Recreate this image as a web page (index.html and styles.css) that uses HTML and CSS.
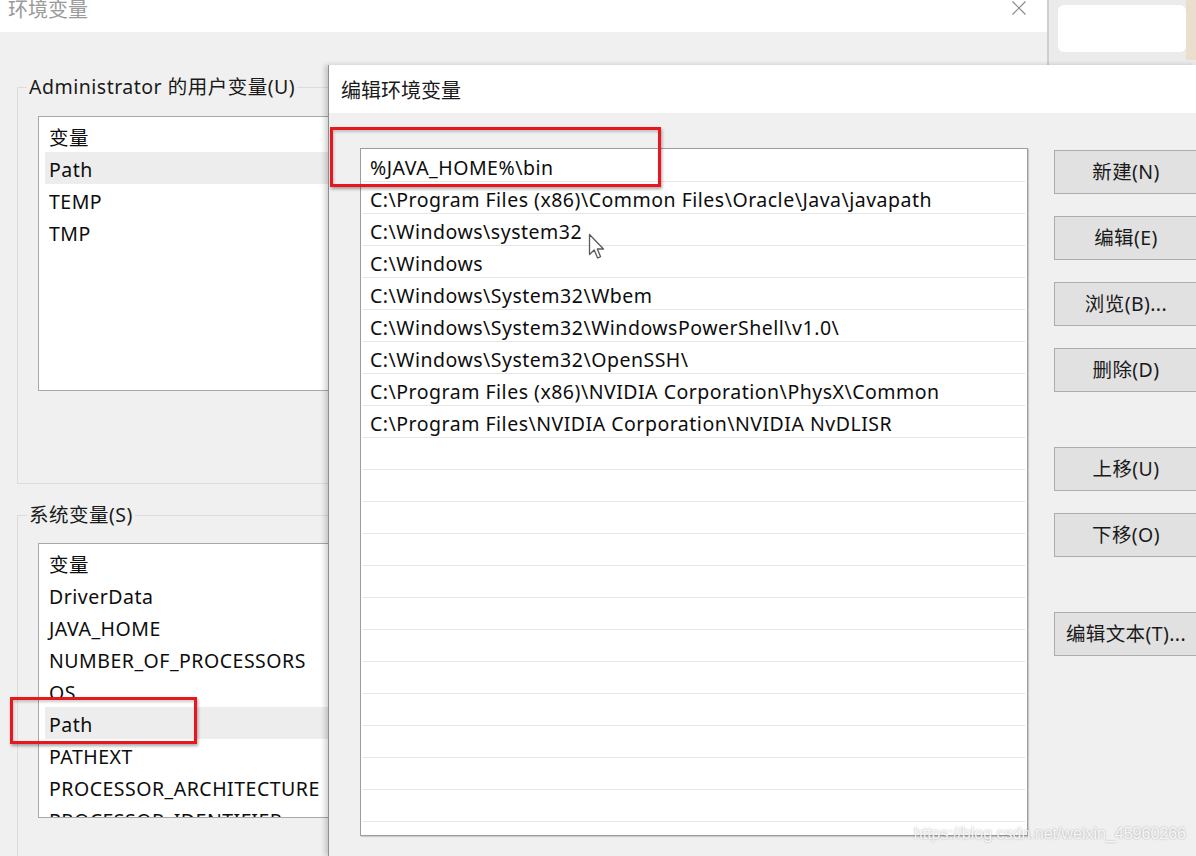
FILE: index.html
```html
<!DOCTYPE html>
<html lang="zh-CN">
<head>
<meta charset="utf-8">
<title>编辑环境变量</title>
<link rel="stylesheet" href="styles.css">
</head>
<body>
<div class="desktop">
  <div class="win back">
    <div class="titlebar">
      <span class="title">环境变量</span>
      <svg class="close" width="16" height="16" viewBox="0 0 16 16"><path d="M1.5 1.5 L14.5 14.5 M14.5 1.5 L1.5 14.5" stroke="#8a8a8a" stroke-width="1.2" fill="none"/></svg>
    </div>
    <div class="back-body">
      <fieldset class="group g1">
        <legend>Administrator 的用户变量(U)</legend>
        <div class="vlist l1">
          <div class="vrow">变量</div>
          <div class="vrow sel">Path</div>
          <div class="vrow">TEMP</div>
          <div class="vrow">TMP</div>
        </div>
      </fieldset>
      <fieldset class="group g2">
        <legend>系统变量(S)</legend>
        <div class="vlist l2">
          <div class="vrow">变量</div>
          <div class="vrow">DriverData</div>
          <div class="vrow">JAVA_HOME</div>
          <div class="vrow">NUMBER_OF_PROCESSORS</div>
          <div class="vrow">OS</div>
          <div class="vrow sel">Path</div>
          <div class="vrow">PATHEXT</div>
          <div class="vrow">PROCESSOR_ARCHITECTURE</div>
          <div class="vrow">PROCESSOR_IDENTIFIER</div>
        </div>
      </fieldset>
    </div>
  </div>

  <div class="win side">
    <div class="side-box"></div>
    <div class="side-edge"></div>
  </div>

  <div class="win front">
    <div class="ftitle">编辑环境变量</div>
    <div class="fbody">
      <div class="plist">
        <div class="prow">%JAVA_HOME%\bin</div>
        <div class="prow">C:\Program Files (x86)\Common Files\Oracle\Java\javapath</div>
        <div class="prow">C:\Windows\system32</div>
        <div class="prow">C:\Windows</div>
        <div class="prow">C:\Windows\System32\Wbem</div>
        <div class="prow">C:\Windows\System32\WindowsPowerShell\v1.0\</div>
        <div class="prow">C:\Windows\System32\OpenSSH\</div>
        <div class="prow">C:\Program Files (x86)\NVIDIA Corporation\PhysX\Common</div>
        <div class="prow">C:\Program Files\NVIDIA Corporation\NVIDIA NvDLISR</div>
        <div class="prow"></div><div class="prow"></div><div class="prow"></div>
        <div class="prow"></div><div class="prow"></div><div class="prow"></div>
        <div class="prow"></div><div class="prow"></div><div class="prow"></div>
        <div class="prow"></div><div class="prow"></div><div class="prow"></div>
        <div class="prow"></div><div class="prow"></div>
      </div>
      <div class="btns">
        <div class="btn">新建(N)</div>
        <div class="btn">编辑(E)</div>
        <div class="btn">浏览(B)...</div>
        <div class="btn">删除(D)</div>
        <div class="btn sep">上移(U)</div>
        <div class="btn">下移(O)</div>
        <div class="btn sep">编辑文本(T)...</div>
      </div>
    </div>
  </div>

  <div class="mark m1"></div>
  <div class="mark m2"></div>

  <svg class="cursor" width="20" height="28" viewBox="0 0 20 28"><path d="M1.5 1.5 L1.5 21.5 L6.2 17 L9.6 25 L12.6 23.7 L9.3 16 L15.5 16 Z" fill="#fff" stroke="#5a5a5a" stroke-width="1.3" stroke-linejoin="round"/></svg>

  <div class="watermark">https://blog.csdn.net/weixin_45960266</div>
</div>
</body>
</html>
```

FILE: styles.css
```css
* { box-sizing: border-box; }
html, body { margin: 0; padding: 0; background: #f0f0f0; }
body {
  font-family: "Noto Sans", "Noto Sans CJK SC", sans-serif;
  color: #0d0d0d;
}
.desktop {
  position: relative;
  width: 1196px;
  height: 856px;
  overflow: hidden;
  background: #f0f0f0;
}
.win { position: absolute; }

/* back window */
.back {
  left: 0; top: 0;
  width: 1047px; height: 856px;
  display: flex; flex-direction: column;
}
.titlebar {
  height: 32px;
  background: #fff;
  display: flex;
  align-items: flex-start;
  justify-content: space-between;
  flex: none;
}
.title {
  font-size: 20px;
  line-height: 20px;
  color: #9a9a9a;
  padding-left: 8px;
}
.close { margin: 0 20px 0 0; }
.back-body {
  flex: 1;
  background: #f0f0f0;
  padding-top: 42px;
  display: flex;
  flex-direction: column;
  align-items: flex-start;
}
.group {
  margin: 0 0 0 17px;
  padding: 0;
  border: 1px solid #dcdcdc;
  width: 560px;
  min-width: 0;
}
.group legend {
  margin-left: 9px;
  padding: 0 2px;
  font-size: 19.5px;
  letter-spacing: 0.5px;
  line-height: 26px;
  color: #1a1a1a;
}
.g2 { margin-top: 18px; padding-bottom: 80px; }
.vlist {
  background: #fff;
  border: 1px solid #a8a8a8;
  width: 420px;
  height: 275px;
  padding: 3px 0 0 6px;
  overflow: hidden;
  margin-left: 20px;
}
.l1 { margin-top: 16px; margin-bottom: 92px; }
.l2 { margin-top: 15px; height: 275px; }
.vrow {
  height: 32px;
  line-height: 31px;
  padding: 2px 0 0 4px;
  font-size: 19.5px;
  letter-spacing: 0.5px;
  white-space: nowrap;
  overflow: hidden;
}
.vrow.sel { background: #ededed; }

/* side window (top right) */
.side {
  left: 1047px; top: 0;
  width: 149px; height: 65px;
  background: #ebebeb;
  border-left: 2px solid #cfcfcf;
  display: flex;
  align-items: flex-start;
  padding: 5px 0 0 9px;
}
.side-box {
  width: 128px; height: 47px;
  background: #fff;
  border-radius: 6px;
}
.side-edge {
  width: 10px; height: 60px;
  margin-top: -5px;
  background: #eadfcc;
}

/* front dialog */
.front {
  left: 328px; top: 65px;
  width: 868px; height: 791px;
  border-left: 1px solid #8f8f8f;
  box-shadow: -3px 0 5px rgba(0,0,0,0.18);
  display: flex; flex-direction: column;
  background: #f0f0f0;
}
.ftitle {
  height: 48px;
  line-height: 48px;
  padding-top: 2px;
  background: #fff;
  padding-left: 12px;
  font-size: 20px;
  color: #1a1a1a;
  flex: none;
}
.fbody {
  flex: 1;
  display: flex;
  align-items: flex-start;
  gap: 26px;
  padding: 35px 0 0 31px;
}
.plist {
  width: 668px;
  height: 688px;
  flex: none;
  background: #fff;
  border: 1px solid #9c9c9c;
  box-shadow: 1px 1px 1px rgba(0,0,0,0.15);
  padding: 1px 2px;
  overflow: hidden;
}
.prow {
  height: 32px;
  line-height: 31px;
  border-bottom: 1px solid #e6e6e6;
  padding: 2px 0 0 7px;
  font-size: 19.5px;
  letter-spacing: 0.5px;
  white-space: nowrap;
  overflow: hidden;
}
.btns {
  display: flex;
  flex-direction: column;
  gap: 22px;
  margin-top: 2px;
  flex: none;
  width: 144px;
}
.btn {
  width: 144px;
  height: 44px;
  background: #e1e1e1;
  border: 1px solid #adadad;
  font-size: 19.5px;
  letter-spacing: 0.4px;
  line-height: 42px;
  text-align: center;
  color: #1a1a1a;
  white-space: nowrap;
}
.btn.sep { margin-top: 33px; }

/* annotation overlays */
.mark {
  position: absolute;
  border: 3px solid #e8161e;
  box-shadow: 1px 2px 3px rgba(0,0,0,0.35), inset 1px 2px 3px rgba(0,0,0,0.2);
}
.m1 { left: 330px; top: 127px; width: 331px; height: 60px; }
.m2 { left: 10px; top: 697px; width: 187px; height: 47px; }

.cursor { position: absolute; left: 588px; top: 233px; }

.watermark {
  position: absolute;
  right: 10px;
  top: 825px;
  font-family: "Liberation Sans", Arial, sans-serif;
  font-size: 16px;
  color: rgba(255,255,255,0.9);
  text-shadow: 0 0 2px rgba(0,0,0,0.35);
}
```
